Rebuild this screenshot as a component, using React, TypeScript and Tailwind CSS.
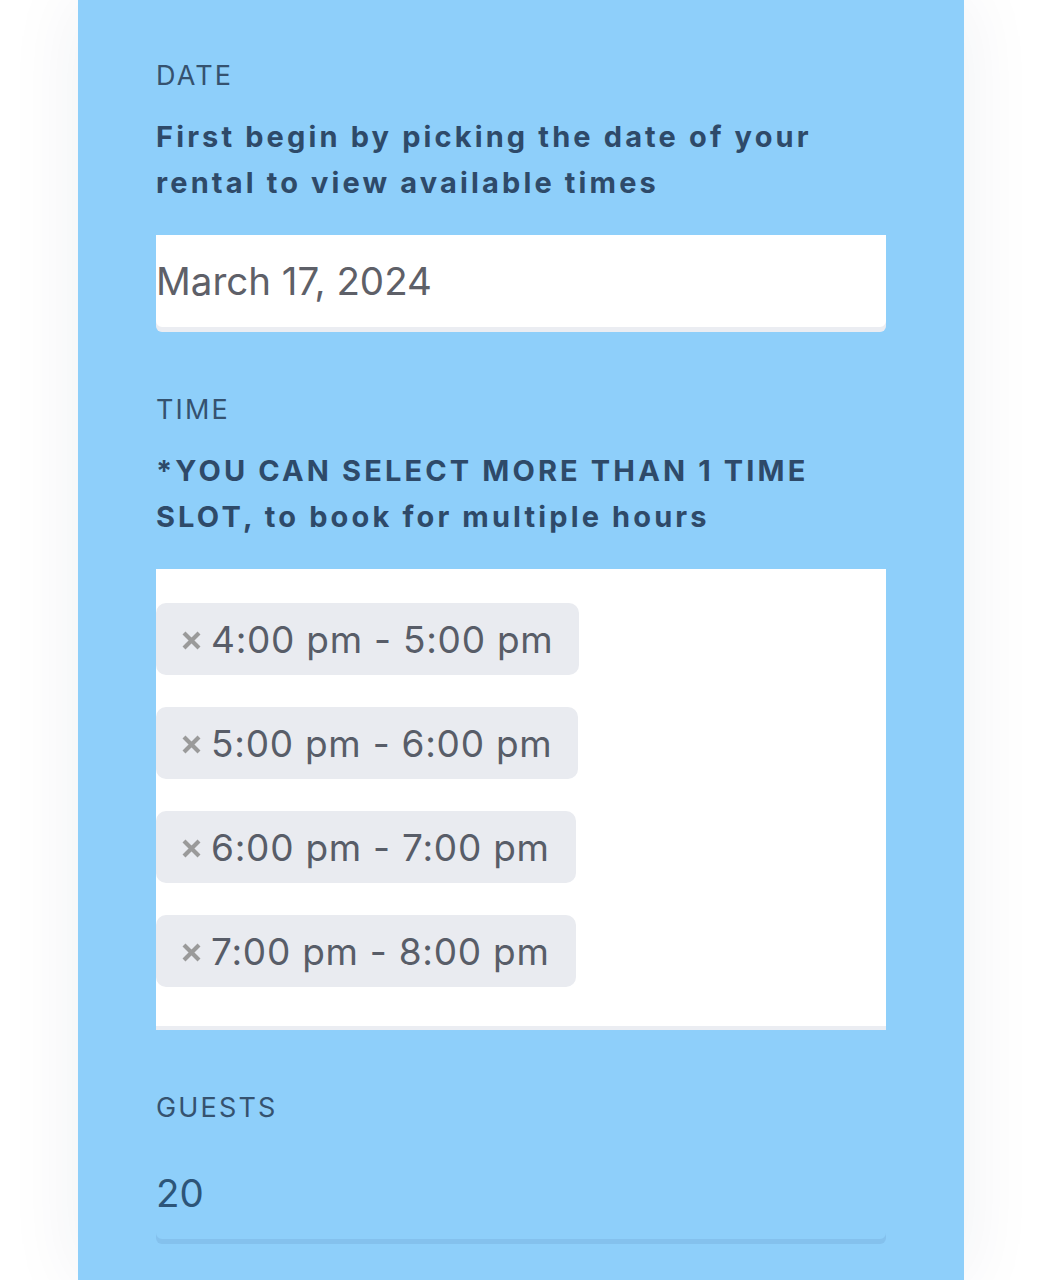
const slots = ["4:00 pm - 5:00 pm", "5:00 pm - 6:00 pm", "6:00 pm - 7:00 pm", "7:00 pm - 8:00 pm"];

function Label({ children }: { children: React.ReactNode }) {
  return <div className="text-[27px] leading-[36px] tracking-[0.08em] text-[#35526f]">{children}</div>;
}

function Hint({ children }: { children: React.ReactNode }) {
  return (
    <p className="mt-[20px] text-[29px] font-bold leading-[46px] tracking-[0.108em] text-[#2e4a69]">{children}</p>
  );
}

function Chip({ text }: { text: string }) {
  return (
    <div className="flex h-[72px] w-fit items-center gap-[9px] rounded-[10px] bg-[#e9ebf0] pl-[25px] pr-[26px]">
      <svg width="21" height="21" viewBox="0 0 21 21" className="mt-[2px] shrink-0">
        <path d="M3 3L18 18M18 3L3 18" stroke="#9a9a9a" strokeWidth="4.2" />
      </svg>
      <span className="text-[37px] leading-none tracking-[0.02em] text-[#585d68]">{text}</span>
    </div>
  );
}

export default function App() {
  return (
    <div className="h-[1280px] overflow-hidden bg-white font-['Inter',sans-serif]">
      <div className="mx-auto h-full w-[886px] bg-[#8ecffa] px-[78px] pt-[58px] shadow-[0_0_70px_rgba(20,40,80,0.07)]">
        <section>
          <Label>DATE</Label>
          <Hint>First begin by picking the date of your rental to view available times</Hint>
          <div className="mt-[29px] flex h-[97px] items-center rounded-b-[6px] bg-white shadow-[inset_0_-5px_0_rgba(30,60,110,0.09)]">
            <span className="pb-[5px] text-[38.5px] leading-none text-[#5e6068]">March 17, 2024</span>
          </div>
        </section>

        <section className="mt-[60px]">
          <Label>TIME</Label>
          <Hint>*YOU CAN SELECT MORE THAN 1 TIME SLOT, to book for multiple hours</Hint>
          <div className="mt-[29px] flex flex-col gap-[32px] bg-white pb-[43px] pt-[34px] shadow-[inset_0_-4px_0_rgba(30,60,110,0.09)]">
            {slots.map((s) => (
              <Chip key={s} text={s} />
            ))}
          </div>
        </section>

        <section className="mt-[60px]">
          <Label>GUESTS</Label>
          <div className="mt-[21px] flex h-[97px] items-center rounded-b-[6px] shadow-[inset_0_-5px_0_rgba(30,60,110,0.09)]">
            <span className="pb-[5px] text-[38.5px] leading-none text-[#2d5578]">20</span>
          </div>
        </section>
      </div>
    </div>
  );
}
